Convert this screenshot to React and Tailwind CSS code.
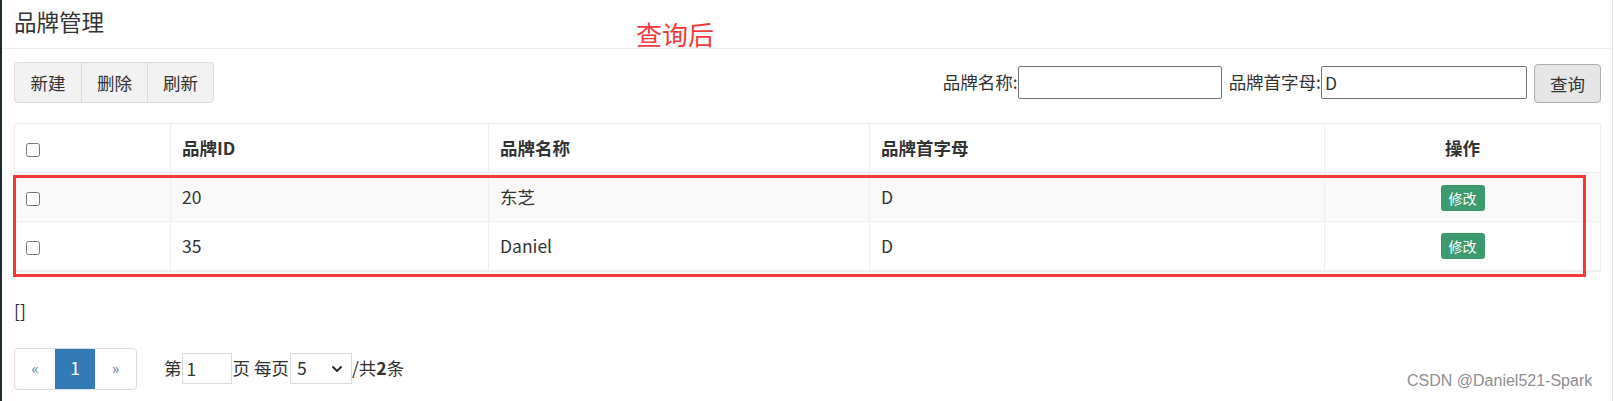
import { ChevronDown } from 'lucide-react';

const ROWS = [
  { id: 20, name: '东芝', letter: 'D', bg: 'bg-[#f9f9f9]' },
  { id: 35, name: 'Daniel', letter: 'D', bg: 'bg-white' },
];

function Check() {
  return <input type="checkbox" className="w-[14px] h-[14px] m-0 align-middle" readOnly />;
}

export default function App() {
  return (
    <div className="flex h-[401px] w-[1614px] bg-white text-[#333] font-['Noto_Sans_CJK_SC',sans-serif] overflow-hidden">
      <div className="w-[2px] bg-[#1f2b33]" />
      <div className="relative flex-1 mr-[1px] border-r border-[#e8e8e8]">
        {/* panel heading */}
        <div className="h-[49px] border-b border-[#eeeeee] pl-[12px] flex items-center">
          <h3 className="text-[22.5px] leading-none font-normal -mt-[6px]">品牌管理</h3>
        </div>

        <div className="pl-[12px] pr-[11px]">
          {/* toolbar */}
          <div className="flex items-center justify-between pt-[13px] text-[17.5px]">
            <div className="flex h-[41px] rounded-[4px] border border-[#dcdcdc] bg-[#f2f2f2] overflow-hidden">
              {['新建', '删除', '刷新'].map((t, i) => (
                <button
                  key={t}
                  className={`w-[66px] leading-none ${i > 0 ? 'border-l border-[#dcdcdc]' : ''}`}
                >
                  {t}
                </button>
              ))}
            </div>
            <div className="flex items-center">
              <span>品牌名称:</span>
              <input className="w-[204px] h-[33px] border border-[#767676] rounded-[2px] px-[3px] outline-none" />
              <span className="ml-[7px]">品牌首字母:</span>
              <input
                className="w-[206px] h-[33px] border border-[#767676] rounded-[2px] px-[3px] outline-none"
                defaultValue="D"
              />
              <button className="ml-[7px] w-[67px] h-[39px] mt-[2px] bg-[#e6e6e6] border border-[#adadad] rounded-[4px] leading-none">
                查询
              </button>
            </div>
          </div>

          {/* table */}
          <table className="mt-[20px] w-[1586px] border-collapse text-[17.5px] table-fixed">
            <colgroup>
              <col className="w-[156px]" />
              <col className="w-[318px]" />
              <col className="w-[381px]" />
              <col className="w-[455px]" />
              <col className="w-[276px]" />
            </colgroup>
            <thead>
              <tr className="h-[49px] border border-[#eeeeee]">
                <th className="border border-[#eeeeee] px-[11px] text-left font-normal">
                  <Check />
                </th>
                <th className="border border-[#eeeeee] px-[11px] text-left font-bold">品牌ID</th>
                <th className="border border-[#eeeeee] px-[11px] text-left font-bold">品牌名称</th>
                <th className="border border-[#eeeeee] px-[11px] text-left font-bold">品牌首字母</th>
                <th className="border border-[#eeeeee] px-[11px] text-center font-bold">操作</th>
              </tr>
            </thead>
            <tbody>
              {ROWS.map((r) => (
                <tr key={r.id} className={`h-[49px] ${r.bg} last:border-b-2 last:border-[#eeeeee]`}>
                  <td className="border border-[#eeeeee] px-[11px]">
                    <Check />
                  </td>
                  <td className="border border-[#eeeeee] px-[11px]">{r.id}</td>
                  <td className="border border-[#eeeeee] px-[11px]">{r.name}</td>
                  <td className="border border-[#eeeeee] px-[11px]">{r.letter}</td>
                  <td className="border border-[#eeeeee] px-[11px] text-center">
                    <span className="inline-flex items-center justify-center w-[44px] h-[26px] rounded-[3px] bg-[#3d9a6f] text-white text-[14px] leading-none">
                      修改
                    </span>
                  </td>
                </tr>
              ))}
            </tbody>
          </table>

          <p className="mt-[26px] text-[17.5px] leading-[25px] text-[#1e2a4a]">[]</p>

          {/* pagination */}
          <div className="mt-[25px] flex items-center text-[17.5px]">
            <div className="flex h-[42px] rounded-[4px] border border-[#dddddd] overflow-hidden">
              <span className="w-[40px] flex items-center justify-center text-[#5b7fa6] text-[15px]">«</span>
              <span className="w-[40px] flex items-center justify-center bg-[#337ab7] text-white">1</span>
              <span className="w-[41px] flex items-center justify-center text-[#5b7fa6] text-[15px]">»</span>
            </div>
            <span className="ml-[27px]">第</span>
            <input
              className="w-[50px] h-[31px] border border-[#dddddd] px-[4px] outline-none"
              defaultValue="1"
            />
            <span className="ml-[1px]">页 每页</span>
            <div className="ml-[1px] w-[62px] h-[31px] border border-[#dddddd] flex items-center justify-between px-[6px]">
              <span>5</span>
              <ChevronDown size={16} strokeWidth={3} className="text-[#333]" />
            </div>
            <span>
              /共<b>2</b>条
            </span>
          </div>
        </div>

        {/* annotations */}
        <span className="absolute left-[634px] top-[21px] text-[26px] leading-none text-[#f23c3c]">查询后</span>
        <div className="absolute left-[11px] top-[175px] w-[1573px] h-[102px] border-[3px] border-[#f23a3a]" />
        <span className="absolute left-[1405px] top-[373px] text-[16px] leading-none text-[#8f8f8f] font-['Liberation_Sans',Arial,sans-serif]">
          CSDN @Daniel521-Spark
        </span>
      </div>
    </div>
  );
}
